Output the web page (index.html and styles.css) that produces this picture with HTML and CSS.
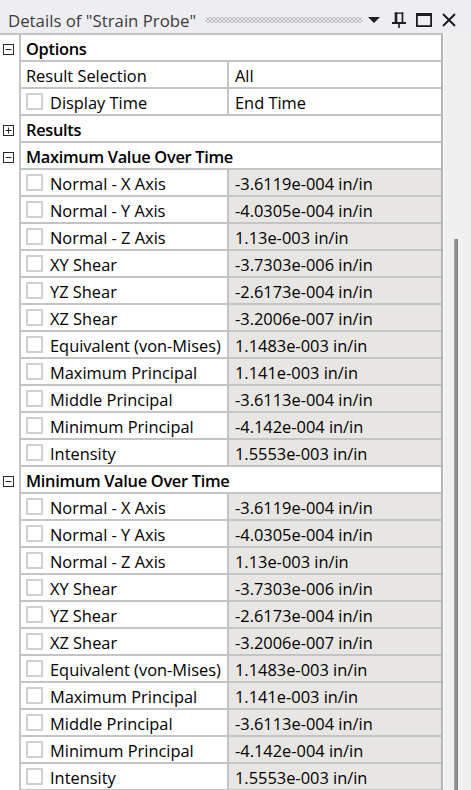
FILE: index.html
```html
<!DOCTYPE html>
<html lang="en">

<head>
    <meta charset="UTF-8">
    <meta name="viewport" content="width=device-width, initial-scale=1.0">
    <title>Details of "Strain Probe"</title>
    <link rel="stylesheet" href="styles.css">
</head>

<body>
    <div class="titlebar">
        <span class="title">Details of "Strain Probe"</span>
        <span class="grip"></span>
        <svg class="tool drop" width="12" height="6" viewBox="0 0 12 6"><polygon points="0,0 12,0 6,6" /></svg>
        <svg class="tool pin" width="14" height="16" viewBox="0 0 14 16">
            <rect x="2.7" y="0.5" width="2.6" height="10" />
            <rect x="9.6" y="0.5" width="1.7" height="10" />
            <rect x="2.7" y="0.5" width="8.6" height="1.3" />
            <rect x="0" y="10" width="14" height="2" />
            <rect x="6.2" y="12" width="1.6" height="4" />
        </svg>
        <svg class="tool max" width="16" height="14" viewBox="0 0 16 14">
            <rect x="0" y="0" width="16" height="3" />
            <rect x="0" y="0" width="1.8" height="14" />
            <rect x="14.2" y="0" width="1.8" height="14" />
            <rect x="0" y="12.2" width="16" height="1.8" />
        </svg>
        <svg class="tool close" width="14" height="14" viewBox="0 0 14 14">
            <path d="M1 1 L13 13 M13 1 L1 13" />
        </svg>
    </div>

    <div class="content">
        <div class="tree">
            <!-- Options -->
            <div class="row group">
                <div class="gutter"><svg class="toggle" width="11" height="11" viewBox="0 0 11 11"><rect x="0.5" y="0.5" width="10" height="10" /><path d="M2.5 5.5 H8.5" /></svg></div>
                <div class="cell">Options</div>
            </div>
            <div class="row">
                <div class="gutter"></div>
                <div class="cell label">Result Selection</div>
                <div class="cell value">All</div>
            </div>
            <div class="row">
                <div class="gutter"></div>
                <div class="cell label"><span class="check"></span>Display Time</div>
                <div class="cell value">End Time</div>
            </div>

            <!-- Results -->
            <div class="row group">
                <div class="gutter"><svg class="toggle" width="11" height="11" viewBox="0 0 11 11"><rect x="0.5" y="0.5" width="10" height="10" /><path d="M2.5 5.5 H8.5 M5.5 2.5 V8.5" /></svg></div>
                <div class="cell">Results</div>
            </div>

            <!-- Maximum Value Over Time -->
            <div class="row group">
                <div class="gutter"><svg class="toggle" width="11" height="11" viewBox="0 0 11 11"><rect x="0.5" y="0.5" width="10" height="10" /><path d="M2.5 5.5 H8.5" /></svg></div>
                <div class="cell">Maximum Value Over Time</div>
            </div>
            <div class="row">
                <div class="gutter"></div>
                <div class="cell label"><span class="check"></span>Normal - X Axis</div>
                <div class="cell value result">-3.6119e-004 in/in</div>
            </div>
            <div class="row">
                <div class="gutter"></div>
                <div class="cell label"><span class="check"></span>Normal - Y Axis</div>
                <div class="cell value result">-4.0305e-004 in/in</div>
            </div>
            <div class="row">
                <div class="gutter"></div>
                <div class="cell label"><span class="check"></span>Normal - Z Axis</div>
                <div class="cell value result">1.13e-003 in/in</div>
            </div>
            <div class="row">
                <div class="gutter"></div>
                <div class="cell label"><span class="check"></span>XY Shear</div>
                <div class="cell value result">-3.7303e-006 in/in</div>
            </div>
            <div class="row">
                <div class="gutter"></div>
                <div class="cell label"><span class="check"></span>YZ Shear</div>
                <div class="cell value result">-2.6173e-004 in/in</div>
            </div>
            <div class="row">
                <div class="gutter"></div>
                <div class="cell label"><span class="check"></span>XZ Shear</div>
                <div class="cell value result">-3.2006e-007 in/in</div>
            </div>
            <div class="row">
                <div class="gutter"></div>
                <div class="cell label"><span class="check"></span>Equivalent (von-Mises)</div>
                <div class="cell value result">1.1483e-003 in/in</div>
            </div>
            <div class="row">
                <div class="gutter"></div>
                <div class="cell label"><span class="check"></span>Maximum Principal</div>
                <div class="cell value result">1.141e-003 in/in</div>
            </div>
            <div class="row">
                <div class="gutter"></div>
                <div class="cell label"><span class="check"></span>Middle Principal</div>
                <div class="cell value result">-3.6113e-004 in/in</div>
            </div>
            <div class="row">
                <div class="gutter"></div>
                <div class="cell label"><span class="check"></span>Minimum Principal</div>
                <div class="cell value result">-4.142e-004 in/in</div>
            </div>
            <div class="row">
                <div class="gutter"></div>
                <div class="cell label"><span class="check"></span>Intensity</div>
                <div class="cell value result">1.5553e-003 in/in</div>
            </div>

            <!-- Minimum Value Over Time -->
            <div class="row group">
                <div class="gutter"><svg class="toggle" width="11" height="11" viewBox="0 0 11 11"><rect x="0.5" y="0.5" width="10" height="10" /><path d="M2.5 5.5 H8.5" /></svg></div>
                <div class="cell">Minimum Value Over Time</div>
            </div>
            <div class="row">
                <div class="gutter"></div>
                <div class="cell label"><span class="check"></span>Normal - X Axis</div>
                <div class="cell value result">-3.6119e-004 in/in</div>
            </div>
            <div class="row">
                <div class="gutter"></div>
                <div class="cell label"><span class="check"></span>Normal - Y Axis</div>
                <div class="cell value result">-4.0305e-004 in/in</div>
            </div>
            <div class="row">
                <div class="gutter"></div>
                <div class="cell label"><span class="check"></span>Normal - Z Axis</div>
                <div class="cell value result">1.13e-003 in/in</div>
            </div>
            <div class="row">
                <div class="gutter"></div>
                <div class="cell label"><span class="check"></span>XY Shear</div>
                <div class="cell value result">-3.7303e-006 in/in</div>
            </div>
            <div class="row">
                <div class="gutter"></div>
                <div class="cell label"><span class="check"></span>YZ Shear</div>
                <div class="cell value result">-2.6173e-004 in/in</div>
            </div>
            <div class="row">
                <div class="gutter"></div>
                <div class="cell label"><span class="check"></span>XZ Shear</div>
                <div class="cell value result">-3.2006e-007 in/in</div>
            </div>
            <div class="row">
                <div class="gutter"></div>
                <div class="cell label"><span class="check"></span>Equivalent (von-Mises)</div>
                <div class="cell value result">1.1483e-003 in/in</div>
            </div>
            <div class="row">
                <div class="gutter"></div>
                <div class="cell label"><span class="check"></span>Maximum Principal</div>
                <div class="cell value result">1.141e-003 in/in</div>
            </div>
            <div class="row">
                <div class="gutter"></div>
                <div class="cell label"><span class="check"></span>Middle Principal</div>
                <div class="cell value result">-3.6113e-004 in/in</div>
            </div>
            <div class="row">
                <div class="gutter"></div>
                <div class="cell label"><span class="check"></span>Minimum Principal</div>
                <div class="cell value result">-4.142e-004 in/in</div>
            </div>
            <div class="row">
                <div class="gutter"></div>
                <div class="cell label"><span class="check"></span>Intensity</div>
                <div class="cell value result">1.5553e-003 in/in</div>
            </div>
        </div>
        <div class="scroll">
            <div class="thumb"></div>
        </div>
    </div>
</body>

</html>
```

FILE: styles.css
```css
* {
    margin: 0;
    padding: 0;
    box-sizing: border-box;
}

html,
body {
    height: 790px;
    overflow: hidden;
}

body {
    background-color: #f0f0f0;
    font-family: "Open Sans", "Noto Sans", sans-serif;
    font-size: 16.4px;
    color: #000;
}

/* panel caption */
.titlebar {
    display: flex;
    align-items: center;
    height: 33px;
    padding: 7px 15px 0 8px;
    background-color: #eeeef2;
}

.title {
    font-size: 16.8px;
    color: #3c3c3c;
    white-space: nowrap;
}

.grip {
    flex: 1;
    height: 6px;
    margin-left: 10px;
    background-image:
        radial-gradient(circle, #b6b6be 0.8px, transparent 1.2px),
        radial-gradient(circle, #b6b6be 0.8px, transparent 1.2px);
    background-size: 4px 4px;
    background-position: 0 0, 2px 2px;
}

.tool {
    flex: none;
    fill: #1e1e1e;
}

.drop {
    margin-left: 6px;
}

.pin {
    margin-left: 12px;
}

.max {
    margin-left: 10px;
}

.close {
    margin-left: 10px;
    fill: none;
    stroke: #1e1e1e;
    stroke-width: 2;
}

/* property grid */
.content {
    display: flex;
}

.tree {
    width: 443px;
    flex: none;
    background-color: #fff;
    border-top: 2px solid #c4c4c4;
    border-right: 2px solid #b4b4b4;
}

.row {
    display: flex;
    height: 27px;
}

.gutter {
    width: 21px;
    flex: none;
    display: flex;
    align-items: center;
    padding: 1px 0 0 3px;
    border-right: 2px solid #c4c4c4;
}

.toggle {
    fill: #fff;
    stroke: #2a2a2a;
    stroke-width: 1;
}

.cell {
    display: flex;
    align-items: center;
    height: 27px;
    padding-top: 2px;
    border-bottom: 2px solid #c4c4c4;
    white-space: nowrap;
}

.group .cell {
    flex: 1;
    padding-left: 5px;
    font-weight: 600;
    letter-spacing: -0.3px;
}

.label {
    width: 208px;
    flex: none;
    padding-left: 5px;
    border-right: 2px solid #c4c4c4;
}

.value {
    flex: 1;
    padding-left: 6px;
}

.value.result {
    background-color: #e7e6e3;
}

.check {
    width: 17px;
    height: 17px;
    flex: none;
    margin-right: 7px;
    margin-top: -2px;
    border: 2px solid #d0d0d0;
    background-color: #fff;
}

/* scroll strip */
.scroll {
    flex: 1;
    padding-left: 10px;
    border-left: 1px solid #fff;
}

.thumb {
    width: 4px;
    height: 600px;
    margin-top: 206px;
    background-color: #8c8c8c;
    border-left: 1px solid #a8a8a8;
}
```
